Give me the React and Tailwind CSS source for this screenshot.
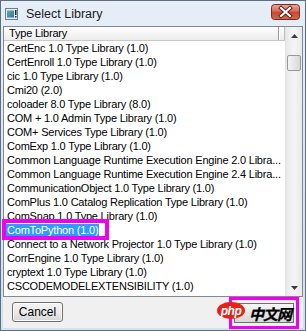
import React from "react";

const rows = [
  "CertEnc 1.0 Type Library (1.0)",
  "CertEnroll 1.0 Type Library (1.0)",
  "cic 1.0 Type Library (1.0)",
  "Cmi20 (2.0)",
  "coloader 8.0 Type Library (8.0)",
  "COM + 1.0 Admin Type Library (1.0)",
  "COM+ Services Type Library (1.0)",
  "ComExp 1.0 Type Library (1.0)",
  "Common Language Runtime Execution Engine 2.0 Libra...",
  "Common Language Runtime Execution Engine 2.4 Libra...",
  "CommunicationObject 1.0 Type Library (1.0)",
  "ComPlus 1.0 Catalog Replication Type Library (1.0)",
  "ComSnap 1.0 Type Library (1.0)",
  "ComToPython (1.0)",
  "Connect to a Network Projector 1.0 Type Library (1.0)",
  "CorrEngine 1.0 Type Library (1.0)",
  "cryptext 1.0 Type Library (1.0)",
  "CSCODEMODELEXTENSIBILITY (1.0)",
  "CTAPORTLib (1.0)",
];

function AppIcon() {
  return (
    <svg width="13" height="12" viewBox="0 0 13 12">
      <defs>
        <linearGradient id="ai" x1="0" y1="0" x2="1" y2="1">
          <stop offset="0" stopColor="#5fb39a" />
          <stop offset="1" stopColor="#2f6fb8" />
        </linearGradient>
      </defs>
      <rect x="0.5" y="0.5" width="12" height="11" fill="#e4eaf0" stroke="#6f7e8d" />
      <rect x="2" y="2.5" width="7" height="7" fill="url(#ai)" />
      <rect x="10" y="2" width="1.5" height="5" fill="#1d2630" />
      <rect x="10" y="8" width="1.5" height="1.5" fill="#1d2630" />
    </svg>
  );
}

function CloseBtn() {
  return (
    <svg width="29" height="16" viewBox="0 0 29 16">
      <defs>
        <linearGradient id="cb" x1="0" y1="0" x2="0" y2="1">
          <stop offset="0" stopColor="#e9a99b" />
          <stop offset="0.45" stopColor="#d56c5a" />
          <stop offset="0.5" stopColor="#c5472f" />
          <stop offset="1" stopColor="#d36a4b" />
        </linearGradient>
      </defs>
      <rect x="0.5" y="0.5" width="28" height="15" rx="3" fill="url(#cb)" stroke="#7d2a1e" />
      <path d="M10 4 L19 12 M19 4 L10 12" stroke="#5a1a12" strokeWidth="4" strokeLinecap="square" />
      <path d="M10 4 L19 12 M19 4 L10 12" stroke="#ffffff" strokeWidth="2.2" strokeLinecap="square" />
    </svg>
  );
}

export default function App() {
  const font = { fontFamily: '"Liberation Sans", Arial, sans-serif' };
  return (
    <div
      className="relative w-[306px] h-[331px] flex flex-col border border-[#5e6f84] bg-gradient-to-b from-[#e6eef8] to-[#d3e0ef] overflow-hidden"
      style={font}
    >
      {/* Title bar */}
      <div className="h-[25px] flex items-center pl-[4px] pr-[5px] shrink-0">
        <div className="mt-[1px]">
          <AppIcon />
        </div>
        <div className="ml-[8px] text-[12.5px] text-[#1b1b1b] leading-none mt-[1px]">Select Library</div>
        <div className="ml-auto -mt-[3px]">
          <CloseBtn />
        </div>
      </div>

      {/* Client */}
      <div className="flex-1 mx-[2px] mb-[2px] bg-[#f0f0f0] flex flex-col">
        {/* List view */}
        <div className="h-[271px] border border-[#828790] bg-white flex shrink-0">
          <div className="flex-1 flex flex-col overflow-hidden">
            {/* Header */}
            <div className="h-[14px] flex shrink-0 border-b border-[#c8c8c8] bg-gradient-to-b from-[#ffffff] to-[#ececec] text-[11px] leading-[13px] text-black tracking-[-0.2px]">
              <div className="w-[275px] pl-[5px] border-r border-[#9a9a9a]">Type Library</div>
              <div className="w-[1px] bg-white" />
              <div className="flex-1 border-r border-[#c0c0c0]" />
            </div>
            {/* Rows */}
            <div className="flex flex-col text-[11px] tracking-[-0.2px] text-black">
              {rows.map((r, i) => (
                <div key={i} className="h-[14px] leading-[14px] pl-[2px] whitespace-nowrap overflow-hidden">
                  {i === 13 ? (
                    <span className="inline-block bg-[#3399ff] text-white px-[1px] h-[13px] leading-[13px]">{r}</span>
                  ) : (
                    <span className="px-[1px]">{r}</span>
                  )}
                </div>
              ))}
            </div>
          </div>
          {/* Scrollbar */}
          <div className="w-[17px] flex flex-col bg-gradient-to-r from-[#e9e9e9] via-[#f5f5f5] to-[#e9e9e9] border-l border-[#e2e2e2]">
            <div className="h-[17px] flex items-center justify-center">
              <svg width="7" height="4" viewBox="0 0 7 4">
                <path d="M0 4 L3.5 0 L7 4 Z" fill="#3c3c3c" />
              </svg>
            </div>
            <div className="h-[11px]" />
            <div className="mx-[1px] h-[16px] rounded-[2px] border border-[#979797] bg-gradient-to-r from-[#f4f4f4] to-[#d9d9d9]" />
            <div className="flex-1" />
            <div className="h-[17px] flex items-center justify-center">
              <svg width="7" height="4" viewBox="0 0 7 4">
                <path d="M0 0 L3.5 4 L7 0 Z" fill="#3c3c3c" />
              </svg>
            </div>
          </div>
        </div>

        {/* Bottom */}
        <div className="flex-1 flex items-start pt-[5px] pl-[9px]">
          <button className="w-[51px] h-[20px] rounded-[3px] border border-[#707070] bg-gradient-to-b from-[#f3f3f3] via-[#ebebeb] to-[#d6d6d6] text-[12px] leading-none text-black shadow-[inset_0_0_0_1px_#fcfcfc]">
            Cancel
          </button>
        </div>
      </div>

      {/* Overlay: highlight annotation around selected row */}
      <div className="absolute left-[1px] top-[218px] w-[107px] h-[21px] border-[4px] border-[#f000f0]" />

      {/* Overlay: watermark box */}
      <div className="absolute left-[228px] top-[296px] w-[70px] h-[32px] border-[3px] border-[#f000f0] bg-[#f0f0f0] flex items-center justify-center">
        <div className="w-[60px] h-[20px] border border-[#707070] bg-gradient-to-b from-[#f6f6f6] to-[#d8d8d8] flex items-center justify-end pr-[2px]">
          <span
            className="text-[15px] font-bold italic leading-none text-black tracking-[-1px]"
            style={{ fontFamily: '"Noto Sans CJK SC", sans-serif', WebkitTextStroke: "0.3px #000" }}
          >
            中文网
          </span>
        </div>
      </div>
      <div className="absolute left-[216px] top-[301px] w-[28px] h-[17px] rounded-[50%] bg-[#e3231b] flex items-center justify-center">
        <span className="text-[12px] italic font-bold leading-none text-white tracking-[-0.5px]" style={{ fontFamily: '"Liberation Sans", Arial, sans-serif' }}>
          php
        </span>
      </div>
    </div>
  );
}
